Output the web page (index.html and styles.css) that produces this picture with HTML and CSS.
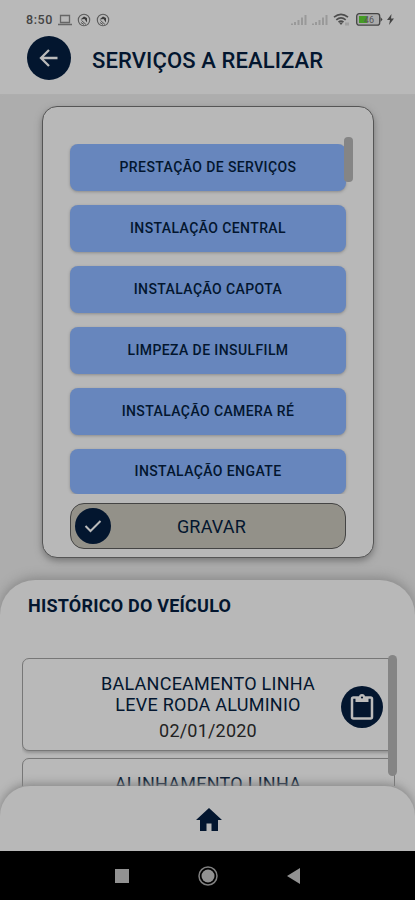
FILE: index.html
```html
<!DOCTYPE html>
<html lang="pt-BR">
<head>
<meta charset="utf-8">
<title>Serviços a realizar</title>
<link rel="stylesheet" href="styles.css">
</head>
<body>
<div class="app">
  <header class="header">
    <div class="status">
      <span class="clock">8:50</span>
      <svg class="laptop" width="14" height="12" viewBox="0 0 14 12"><path d="M2.5 1.5h9v7h-9z M0 10.5h14" fill="none" stroke="#666" stroke-width="1.3"/></svg>
      <svg class="round" width="14" height="14" viewBox="0 0 14 14"><circle cx="7" cy="7" r="5.7" fill="none" stroke="#5c5c5c" stroke-width="1.1"/><path d="M3.5 6.5 7 3.5l3 1.5v4.500L7.500 6z" fill="#3c3c3c"/><path d="M4.500 7.500 9 11.500M4 9.500l3 2" stroke="#555"/></svg>
      <svg class="round" width="14" height="14" viewBox="0 0 14 14"><circle cx="7" cy="7" r="5.7" fill="none" stroke="#5c5c5c" stroke-width="1.1"/><path d="M3.5 6.5 7 3.5l3 1.5v4.500L7.500 6z" fill="#3c3c3c"/><path d="M4.500 7.500 9 11.500M4 9.500l3 2" stroke="#555"/></svg>
      <span class="spacer"></span>
      <svg class="signal" width="16" height="12" viewBox="0 0 16 12"><path d="M1 11V9.5M4 11V8M7.5 11V6M11 11V3.500M14.500 11V1" stroke="#999" stroke-width="2"/></svg>
      <svg class="signal" width="16" height="12" viewBox="0 0 16 12"><path d="M1 11V9.5M4 11V8M7.500 11V6M11 11V3.500M14.500 11V1" stroke="#999" stroke-width="2"/></svg>
      <svg class="wifi" width="17" height="13" viewBox="0 0 17 13"><path d="M1 4.200Q8-1.500 15 4.200M3.300 6.800Q8 3 12.700 6.800M5.500 9.200Q8 7.200 10.500 9.200" fill="none" stroke="#4d4d4d" stroke-width="1.7"/><path d="m6 9.500 2 2.500 2-2.500z" fill="#4d4d4d"/><path d="M13 9.500v3M15 9.500v3" stroke="#888"/></svg>
      <svg class="battery" width="27" height="13" viewBox="0 0 27 13"><rect x=".7" y=".7" width="23" height="11.500" rx="2.500" fill="#aaa" stroke="#444" stroke-width="1.300"/><path d="M24.500 4l2 2.500-2 2.500z" fill="#444"/><path d="M3 3h8v7H3z" fill="#459b25"/><text x="8" y="9.700" class="level">46</text></svg>
      <svg class="bolt" width="7" height="11" viewBox="0 0 7 11"><path d="M4.500 0 0 6h3L2 11l5-6.500H4z" fill="#444"/></svg>
    </div>
    <div class="titlebar">
      <span class="disc back"><svg width="20" height="20" viewBox="0 0 20 20"><path d="M18.500 10H2M10 2 2 10l8 8" fill="none" stroke="#bbb" stroke-width="2.300"/></svg></span>
      <h1>SERVIÇOS A REALIZAR</h1>
    </div>
  </header>
  <main class="main">
    <section class="panel">
      <div class="services">
        <button class="service">PRESTAÇÃO DE SERVIÇOS</button>
        <button class="service">INSTALAÇÃO CENTRAL</button>
        <button class="service">INSTALAÇÃO CAPOTA</button>
        <button class="service">LIMPEZA DE INSULFILM</button>
        <button class="service">INSTALAÇÃO CAMERA RÉ</button>
        <button class="service">INSTALAÇÃO ENGATE</button>
      </div>
      <span class="scroll services-scroll"></span>
      <button class="save">
        <span class="disc check"><svg width="18" height="14" viewBox="0 0 18 14"><path d="m1.500 7 5 5 10-10" fill="none" stroke="#bbb" stroke-width="2"/></svg></span>
        <span>GRAVAR</span>
      </button>
    </section>
  </main>
  <section class="history">
    <h2>HISTÓRICO DO VEÍCULO</h2>
    <div class="records">
      <article class="record">
        <p class="name">BALANCEAMENTO LINHA<br>LEVE RODA ALUMINIO</p>
        <p class="date">02/01/2020</p>
        <span class="disc clip"><svg width="24" height="28" viewBox="0 0 24 28"><rect x="2" y="4.500" width="20" height="21" rx="1.500" fill="none" stroke="#bbb" stroke-width="2.500"/><path d="M5.500 9V4H9a3 3 0 0 1 6 0h3.500v5z" fill="#bbb"/><circle cx="12" cy="4.500" r="1.100" fill="#03162f"/></svg></span>
      </article>
      <article class="record">
        <p class="name">ALINHAMENTO LINHA</p>
        <span class="disc clip"></span>
      </article>
    </div>
    <span class="scroll history-scroll"></span>
  </section>
  <nav class="tabs"><svg width="26" height="23" viewBox="0 0 26 23"><path d="M13 0 0 12h4v11h6.500v-7.500h5V23H22V12h4z" fill="#03162f"/></svg></nav>
  <footer class="system">
    <svg width="14" height="14" viewBox="0 0 14 14"><path d="M0 0h14v14H0z" fill="#929292"/></svg>
    <svg width="20" height="20" viewBox="0 0 20 20"><circle cx="10" cy="10" r="9" fill="none" stroke="#808080" stroke-width="1.500"/><circle cx="10" cy="10" r="6.500" fill="#929292"/></svg>
    <svg width="14" height="16" viewBox="0 0 14 16"><path d="M13 0v16L0 8z" fill="#929292"/></svg>
  </footer>
</div>
</body>
</html>
```
FILE: styles.css
```css
* { box-sizing: border-box; }
body { margin: 0; font-family: Roboto, "Liberation Sans", sans-serif; color: #03162f; }
h1, h2, p { margin: 0; }
button { font: inherit; color: inherit; padding: 0; border: 0; }
svg { display: block; flex: none; }
.app { width: 415px; height: 900px; display: flex; flex-direction: column; overflow: hidden; background: #adadad; }
.header { height: 94px; flex: none; background: #b9b9b9; box-shadow: 0 0 3px #b1b1b1; }
.status { height: 36px; padding: 3px 21px 0 26px; display: flex; align-items: center; }
.clock { width: 26px; font-size: 12.5px; font-weight: 500; letter-spacing: .6px; color: #444; }
.laptop { margin-left: 6px; }
.round { margin-left: 5px; }
.spacer { flex: 1; }
.signal { margin-right: 5px; }
.wifi { margin-right: 6px; }
.battery { margin-right: 4px; }
.level { font-size: 9px; fill: #555; }
.titlebar { display: flex; align-items: center; padding-left: 27px; height: 44px; }
.disc { border-radius: 50%; background: #03162f; display: flex; align-items: center; justify-content: center; flex: none; }
.back { width: 44px; height: 44px; }
h1 { font-size: 22px; line-height: 26px; font-weight: 500; letter-spacing: .12px; margin: 5px 0 0 21px; white-space: nowrap; }
.main { padding: 12px 41px 0 42px; height: 486px; flex: none; }
.panel { position: relative; height: 452px; padding: 37px 27px 0; border: 1px solid #555; border-radius: 15px; background: #b8b8b8; box-shadow: 0 3px 7px #777; }
.services { height: 350px; overflow: hidden; display: flex; flex-direction: column; gap: 14px; margin: 0 -3px; padding: 0 3px; }
.service { height: 47px; flex: none; border-radius: 8px; background: #6786bd; font-size: 14px; font-weight: 500; letter-spacing: .4px; padding-bottom: 2px; box-shadow: 0 1px 3px #8b8b8b; }
.service:last-child { height: 45px; padding-bottom: 1px; }
.scroll { position: absolute; border-radius: 4px; background: #858585; width: 9px; }
.services-scroll { height: 45px; top: 30px; right: 20px; }
.save { position: relative; width: 100%; height: 46px; margin-top: 9px; border: 1px solid #444; border-radius: 14px; background: #939189; font-size: 18px; letter-spacing: .2px; display: flex; align-items: center; justify-content: center; padding-left: 7px; }
.check { width: 36px; height: 36px; position: absolute; left: 4px; top: 4px; }
.history { position: relative; flex: none; height: 241px; border-radius: 35px 35px 0 0; background: #b8b8b8; padding: 15px 20px 0 22px; box-shadow: 0 -2px 12px #858585; }
h2 { font-size: 18px; line-height: 22px; font-weight: 700; letter-spacing: .22px; padding-left: 6px; white-space: nowrap; }
.records { margin-top: 41px; height: 128px; overflow: hidden; display: flex; flex-direction: column; gap: 7px; }
.record { position: relative; flex: none; height: 93px; border: 1px solid #777; border-radius: 7px; padding: 14px 1px 0 0; text-align: center; background: #b9b9b9; box-shadow: 0 2px 3px #929292; }
.name { font-size: 18px; line-height: 21px; letter-spacing: .26px; }
.date { font-size: 18px; line-height: 21px; letter-spacing: .2px; margin-top: 5px; color: #222; }
.clip { position: absolute; right: 11px; top: 27px; width: 42px; height: 42px; }
.history-scroll { left: 388px; top: 75px; height: 121px; border-radius: 5px; }
.tabs { flex: none; height: 65px; margin-top: -35px; position: relative; border-radius: 30px 30px 0 0; background: #b8b8b8; display: flex; justify-content: center; padding: 22px 0 0 3px; box-shadow: 0 -2px 10px #858585; }
.system { position: relative; flex: none; height: 49px; background: #000; display: flex; justify-content: center; align-items: center; gap: 77px; }
.system svg:nth-child(2) { margin: 0 -8px; }
```
